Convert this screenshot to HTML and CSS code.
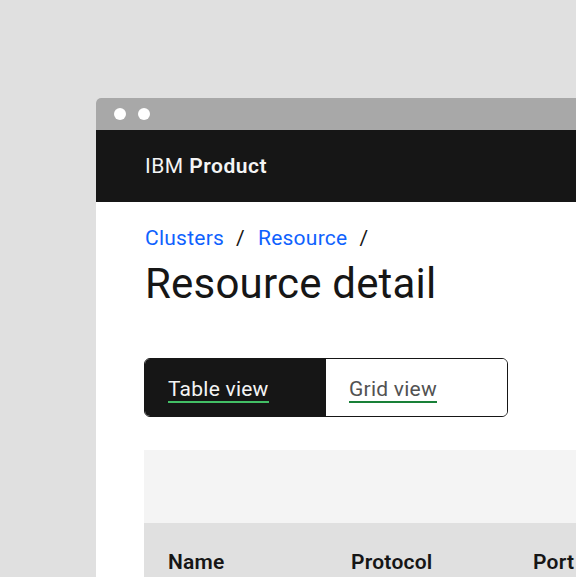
FILE: index.html
```html
<!DOCTYPE html>
<html>
<head>
<meta charset="utf-8">
<link rel="stylesheet" href="styles.css">
</head>
<body>
<div class="window">
  <div class="titlebar"><span class="dot"></span><span class="dot"></span></div>
  <header class="header"><span class="brand-prefix">IBM</span>&nbsp;<span class="brand-name">Product</span></header>
  <main class="content">
    <nav class="breadcrumb">
      <a class="crumb">Clusters</a><span class="sep">/</span><a class="crumb">Resource</a><span class="sep">/</span>
    </nav>
    <h1 class="title">Resource detail</h1>
    <div class="switcher">
      <div class="switch selected"><span class="switch-label">Table view</span></div>
      <div class="switch"><span class="switch-label">Grid view</span></div>
    </div>
    <div class="table">
      <div class="toolbar"></div>
      <div class="thead">
        <div class="th">Name</div>
        <div class="th">Protocol</div>
        <div class="th">Port</div>
      </div>
    </div>
  </main>
</div>
</body>
</html>
```
FILE: styles.css
```css
html, body {
  margin: 0;
  padding: 0;
}
body {
  background: #e0e0e0;
  width: 576px;
  height: 577px;
  overflow: hidden;
  font-family: Roboto, "Noto Sans", "Liberation Sans", sans-serif;
  color: #161616;
  letter-spacing: 0.24px;
}
.window {
  margin: 98px 0 0 96px;
  width: 480px;
  height: 479px;
  background: #ffffff;
  border-radius: 5px 0 0 0;
  overflow: hidden;
}
.titlebar {
  height: 32px;
  background: #a8a8a8;
  display: flex;
  align-items: center;
  gap: 12px;
  padding-left: 18px;
}
.dot {
  width: 12px;
  height: 12px;
  border-radius: 50%;
  background: #ffffff;
}
.header {
  height: 72px;
  background: #161616;
  color: #f4f4f4;
  display: flex;
  align-items: center;
  padding-left: 49px;
  font-size: 21px;
  letter-spacing: 0.5px;
}
.brand-name {
  font-weight: 600;
}
.content {
  padding: 22px 0 0 48px;
}
.breadcrumb {
  display: flex;
  align-items: center;
  height: 28px;
  font-size: 21px;
}
.crumb {
  color: #0f62fe;
  padding-left: 1px;
}
.sep {
  margin: 0 12px;
  color: #161616;
}
.title {
  margin: 6px 0 0 0;
  font-size: 42px;
  font-weight: 400;
  line-height: 52px;
  padding-left: 1px;
  letter-spacing: 0.2px;
}
.switcher {
  margin-top: 48px;
  width: 364px;
  height: 59px;
  display: flex;
  border-radius: 6px;
  overflow: hidden;
  box-sizing: border-box;
  border: 1.5px solid #161616;
}
.switch {
  flex: 1;
  display: flex;
  align-items: center;
  padding-left: 23px;
  background: #ffffff;
  color: #525252;
  font-size: 21px;
}
.switch.selected {
  background: #161616;
  color: #f4f4f4;
}
.switch-label {
  padding-top: 5px;
  border-bottom: 2.5px solid #198038;
  line-height: 24px;
}
.switch.selected .switch-label {
  border-bottom-color: #42be65;
}
.table {
  margin-top: 33px;
}
.toolbar {
  height: 73px;
  background: #f4f4f4;
}
.thead {
  height: 72px;
  background: #e0e0e0;
  display: grid;
  grid-template-columns: 183px 182px 182px;
}
.th {
  padding: 27px 0 0 24px;
  font-size: 21px;
  font-weight: 600;
}
```
